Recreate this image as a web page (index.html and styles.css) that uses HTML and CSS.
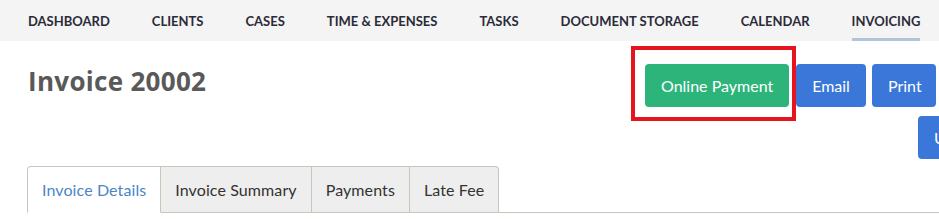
FILE: index.html
```html
<!DOCTYPE html>
<html>
<head>
<meta charset="utf-8">
<link rel="stylesheet" href="styles.css">
</head>
<body>
<nav class="topnav">
  <a class="nav-item">DASHBOARD</a>
  <a class="nav-item">CLIENTS</a>
  <a class="nav-item">CASES</a>
  <a class="nav-item">TIME &amp; EXPENSES</a>
  <a class="nav-item">TASKS</a>
  <a class="nav-item">DOCUMENT STORAGE</a>
  <a class="nav-item">CALENDAR</a>
  <a class="nav-item active">INVOICING</a>
</nav>
<main class="page">
  <section class="header">
    <h1 class="title">Invoice 20002</h1>
    <div class="actions">
      <div class="action-row">
        <div class="highlight-wrap">
          <button class="btn btn-green">Online Payment</button>
          <span class="highlight"></span>
        </div>
        <button class="btn btn-blue btn-email">Email</button>
        <button class="btn btn-blue btn-print">Print</button>
      </div>
      <div class="action-row second">
        <button class="btn btn-blue">Update</button>
      </div>
    </div>
  </section>
  <div class="tabs">
    <div class="tab active">Invoice Details</div>
    <div class="tab">Invoice Summary</div>
    <div class="tab">Payments</div>
    <div class="tab">Late Fee</div>
    <div class="tab-fill"></div>
  </div>
</main>
</body>
</html>
```
FILE: styles.css
```css
html, body {
  margin: 0;
  padding: 0;
  background: #ffffff;
  overflow: hidden;
  width: 939px;
  height: 219px;
}
body {
  font-family: "Lato", "Liberation Sans", sans-serif;
}
.topnav {
  display: flex;
  height: 41px;
  background: #f4f4f4;
  padding-left: 28px;
  gap: 42px;
  box-sizing: border-box;
}
.nav-item {
  display: flex;
  align-items: center;
  height: 41px;
  box-sizing: border-box;
  font-size: 13px;
  font-weight: 700;
  color: #2b2b38;
  white-space: nowrap;
  border-bottom: 3px solid transparent;
  padding-top: 4px;
  flex: none;
}
.nav-item.active {
  border-bottom-color: #b0c4dc;
}
.page {
  padding-left: 27px;
}
.header {
  display: flex;
  align-items: flex-start;
  padding-top: 23px;
}
.title {
  flex: none;
  margin: 0;
  width: 618px;
  font-family: "Open Sans", "Liberation Sans", sans-serif;
  font-size: 26px;
  font-weight: 700;
  color: #595959;
  line-height: 34px;
  padding-left: 1px;
  letter-spacing: 0.3px;
  white-space: nowrap;
  box-sizing: border-box;
}
.actions {
  flex: none;
  display: flex;
  flex-direction: column;
  align-items: flex-start;
}
.action-row {
  display: flex;
  gap: 6px;
  white-space: nowrap;
}
.action-row.second {
  margin-top: 9px;
  margin-left: 273px;
}
.btn {
  flex: none;
  height: 43px;
  border: none;
  border-radius: 4px;
  font-family: "Lato", "Liberation Sans", sans-serif;
  font-size: 16px;
  color: #ffffff;
  padding: 0 16px;
  cursor: pointer;
}
.btn-green {
  background: #2db47a;
  width: 144px;
}
.btn-blue {
  background: #3a77d8;
}
.btn-email {
  margin-left: 1px;
  width: 70px;
}
.btn-print {
  width: 64px;
}
.highlight-wrap {
  position: relative;
  display: flex;
}
.highlight {
  position: absolute;
  left: -14px;
  top: -18px;
  right: -7px;
  bottom: -14px;
  border: 4px solid #e5141e;
  pointer-events: none;
}
.tabs {
  display: flex;
  margin-top: 7px;
  height: 47px;
}
.tab {
  display: flex;
  align-items: center;
  padding: 0 14px;
  font-size: 16px;
  letter-spacing: 0.1px;
  color: #333333;
  background: #eeeeee;
  border: 1px solid #c9c5b8;
  border-left: none;
  box-sizing: border-box;
  white-space: nowrap;
}
.tab.active {
  background: #ffffff;
  color: #4a86c6;
  border-left: 1px solid #c9c5b8;
  border-bottom-color: #ffffff;
  border-radius: 4px 0 0 0;
}
.tab:nth-child(4) {
  border-radius: 0 4px 0 0;
}
.tab-fill {
  flex: 1;
  border-bottom: 1px solid #c9c5b8;
}
```
